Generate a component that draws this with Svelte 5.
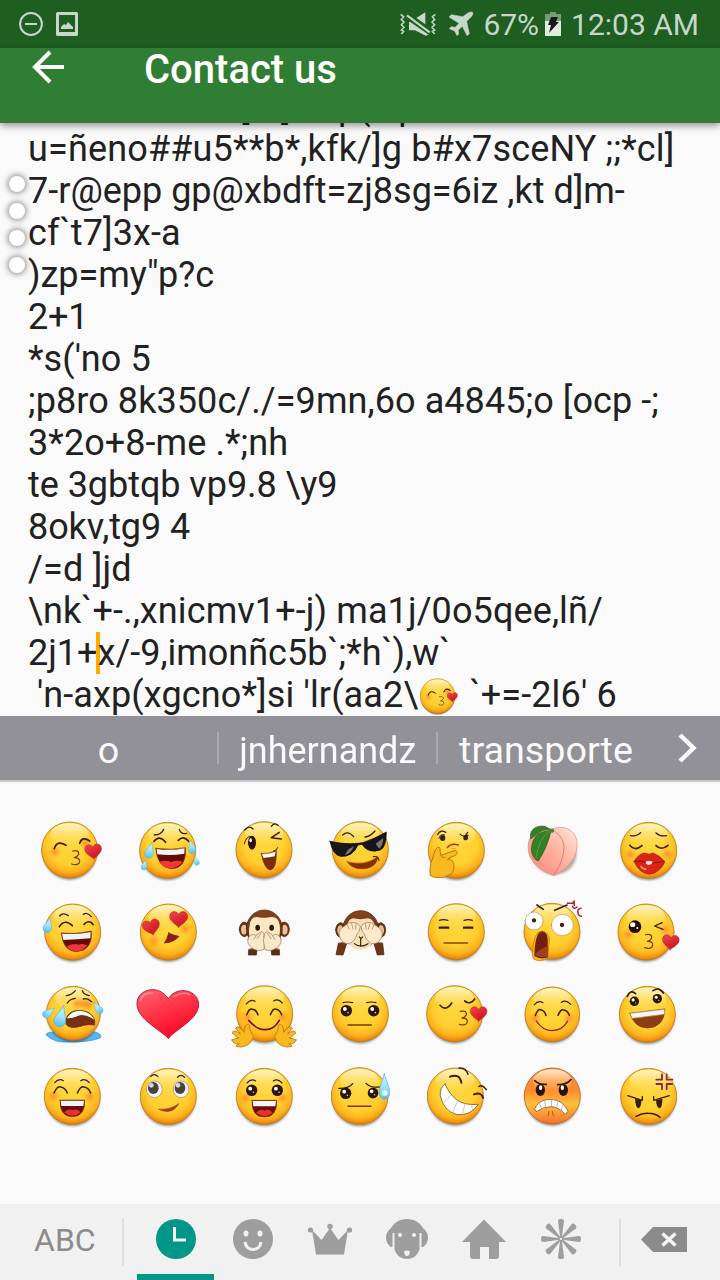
<script>
  const dark = '#35200c';
  const f = (d, fill) => ({ d, fill, stroke: 'none', w: 0 });
  const s = (d, w = 4, stroke = dark) => ({ d, fill: 'none', stroke, w });
  const b = (d, fill, stroke, w = 2) => ({ d, fill, stroke, w });
  const disc = (x, y, rx, ry = rx) =>
    `M${x - rx} ${y}a${rx} ${ry} 0 1 0 ${2 * rx} 0a${rx} ${ry} 0 1 0 ${-2 * rx} 0z`;
  const arch = (x, y, r, h = r) => s(`M${x - r} ${y + h / 2}Q${x - r / 2} ${y - h * 0.75} ${x} ${y - h * 0.5}Q${x + r * 0.7} ${y - h * 0.4} ${x + r} ${y + h / 2}`, 4.5);
  const brow = (x, y, r, t = 0) => s(`M${x - r} ${y + 4 + t}Q${x} ${y - 8} ${x + r} ${y + 4 - t}`, 3.5);
  const heart = (x, y, k, r = 0) => ({
    ...b('M0 24C-7 16 -25 8 -25 -6C-25 -21 -7 -25 0 -11C6 -25 25 -21 25 -6C25 8 7 16 0 24z', 'url(#red)', '#b92028', 1.5),
    t: `translate(${x} ${y}) rotate(${r}) scale(${k})`
  });
  const three = (x, y) => s(`M${x - 10} ${y - 21}Q${x + 10} ${y - 25} ${x + 8} ${y - 11}Q${x + 4} ${y - 3} ${x - 5} ${y - 1}Q${x + 12} ${y - 1} ${x + 11} ${y + 11}Q${x + 8} ${y + 24} ${x - 13} ${y + 18}`, 3.8, '#7b3c0c');
  const eye = (x, y, r) => [f(disc(x, y, r, r * 1.02), '#2b1606'), f(disc(x - r * 0.25, y - r * 0.3, r * 0.34), '#fff'), f(disc(x + r * 0.3, y + r * 0.35, r * 0.14), '#cdb')];
  const drop = (x, y, k, r = 0) => ({
    ...b('M0 -26C5 -10 14 0 13 10C12 26 -12 26 -13 10C-13 0 -5 -10 0 -26z', 'url(#water)', '#4fb3d8', 1.5),
    t: `translate(${x} ${y}) rotate(${r}) scale(${k})`
  });
  const laugh = (x, y, w = 37) => [
    b(`M${x - w} ${y - 24}L${x + w} ${y - 24}Q${x + w + 2} ${y + 26} ${x} ${y + 26}Q${x - w - 2} ${y + 26} ${x - w} ${y - 24}z`, '#6b0d0c', '#8a3a08'),
    f(`M${x - w * 0.68} ${y + 13}Q${x - w * 0.3} ${y} ${x} ${y + 7}Q${x + w * 0.4} ${y} ${x + w * 0.68} ${y + 13}Q${x} ${y + 34} ${x - w * 0.68} ${y + 13}z`, '#e5322f'),
    f(`M${x - w + 2} ${y - 22}H${x + w - 2}L${x + w - 4} ${y - 6}H${x - w + 4}z`, '#f1f5f8')
  ];

  const monkeyHead = (x, y) => [
    b(disc(x - 60, y + 2, 15, 22), '#6a3213', '#4c2009'), f(disc(x - 61, y + 3, 9, 15), '#e9c295'),
    b(disc(x + 60, y + 2, 15, 22), '#6a3213', '#4c2009'), f(disc(x + 61, y + 3, 9, 15), '#e9c295'),
    b(disc(x, y, 54, 56), 'url(#brown)', '#4c2009')
  ];

  const emojis = [
    { n: 'kiss', v: [12, 0], face: [149, 120], blush: [[104, 126], [196, 98]], p: [s('M103 116Q110 89 138 106', 5), s('M179 100Q187 77 209 93', 5), three(168, 144), heart(220, 123, 1, -5)] },
    { n: 'joy', v: [300, 0], face: [443, 121], p: [s('M403 75Q425 75 431 58', 4), s('M478 58Q483 74 500 70', 4), s('M402 94Q418 73 437 97', 5), s('M475 91Q490 75 506 94', 5),
      b('M407 115Q453 121 497 113Q500 176 453 176Q413 174 407 115z', '#650907', '#8a3a08'), f('M418 155Q442 149 453 156Q474 149 488 156Q470 176 450 175Q427 173 418 155z', '#ec3938'), f('M410 117Q453 123 494 115L493 131Q453 138 412 133z', '#eef3f8'),
      drop(389, 123, 1, 15), drop(515, 112, 0.85, -12), drop(373, 166, 0.65, 15), drop(529, 153, 0.6, -15)] },
    { n: 'wink', v: [588, 0], face: [732, 119], p: [s('M674 60Q687 44 699 57', 4), s('M754 49Q764 36 774 46', 4), f(disc(696, 98, 12, 21), '#2b1407'), f(disc(692, 91, 4, 6), '#fff'), s('M673 101Q679 76 695 79', 3), s('M778 67L754 83L784 87', 4.5),
      b('M724 131Q750 132 769 122Q770 176 751 180Q733 177 724 131z', '#7c2d0b', '#6a1f05'), f('M726 132Q750 132 767 125L764 139Q746 142 730 144z', '#fff'), s('M760 124Q771 121 773 113', 3)] },
    { n: 'cool', v: [6, 0], face: [151, 119], p: [s('M98 75Q114 60 131 80', 4), s('M165 81Q180 80 195 63', 4), b('M111 155Q163 170 204 140Q200 174 158 177Q125 177 111 155z', '#852e06', '#b64b05'), s('M190 140Q204 137 207 151', 3.5),
      b('M60 94Q105 104 142 100L158 98Q190 88 229 66Q229 112 211 120Q174 132 156 103L144 105Q128 142 91 139Q68 134 60 94z', '#171717', '#000'), f('M114 119L132 108Q124 130 104 136zM197 101L220 84Q219 105 208 116z', '#777')] },
    { n: 'think', v: [294, 0], face: [439, 121], p: [s('M383 74Q391 57 407 67', 4), f(disc(398, 84, 8, 9), dark), s('M387 85Q389 72 403 74', 3), f(disc(467, 83, 7, 8), dark), s('M450 72Q458 82 474 76M466 77L473 67', 3.5), s('M412 113Q424 98 445 105', 4, '#b52a0b'), s('M424 116Q431 113 436 116', 3, '#f49b24'),
      b('M361 196Q357 169 367 148Q374 117 383 112Q393 110 390 124L393 136L431 122Q444 121 441 131Q440 136 415 145Q431 151 432 167Q433 191 414 196L398 203L377 202Q363 201 361 196z', '#f7b91d', '#bb7711', 3), s('M391 136Q396 145 405 143M419 147L412 149', 2.5, '#bb7711')] },
    { n: 'peach', v: [12, 0], p: [{ ...f(disc(164, 130, 66, 64), '#b9aaa6'), soft: true }, b('M157 57Q188 44 213 62Q239 84 229 124Q218 168 162 197Q107 178 91 143Q76 107 94 76Q120 48 157 57z', 'url(#peach)', '#dd8e7c'), s('M166 65Q198 88 191 126Q184 166 162 193', 3, '#e8796b'),
      b('M92 86Q88 62 106 53Q131 40 153 61Q128 55 112 73z', '#397f2a', '#205a16'), b('M153 63Q118 60 100 90Q88 122 101 141Q106 151 115 153Q142 112 153 63z', '#348027', '#205a16'), s('M150 62Q117 82 108 143', 2, '#73ad47'), f(disc(156, 62, 7, 6), '#3c8c28')] },
    { n: 'lips', v: [300, 0], face: [446, 121], blush: [[391, 134], [502, 133]], p: [s('M391 77Q411 80 422 68M468 69Q479 80 500 77', 4), s('M389 106Q405 125 426 107M468 107Q484 123 504 106', 5), b('M402 154Q417 130 434 129Q446 136 459 129Q478 136 495 155Q480 188 449 193Q417 190 402 154z', '#da2516', '#991a0b'), f('M434 157Q447 150 460 156Q453 166 446 165Q438 165 434 157z', '#e9e4e0'), s('M404 155Q425 150 437 158M457 159L491 155', 3, '#8e1209'), s('M423 170Q428 177 437 178', 5, '#ff9b7f')] },

    { n: 'sweat-laugh', v: [12, 246], face: [158, 366], p: [s('M119 318Q128 306 145 317M190 313Q202 305 214 320', 4), s('M118 350Q135 325 157 347M192 343Q207 327 220 344', 5), b('M124 369Q172 373 214 363Q219 422 169 425Q129 424 124 369z', '#650b08', '#893707'), f('M140 409Q165 398 176 404Q191 399 202 407Q184 426 166 424Q145 421 140 409z', '#ec3938'), f('M126 371Q172 375 212 366L211 385Q170 389 130 390z', '#eef3f8'), drop(84, 347, 0.95, 16)] },
    { n: 'love', v: [300, 246], face: [445, 366], blush: [[402, 393], [496, 357]], p: [heart(394, 350, 1.03, -14), heart(476, 326, 1.08, 0), b('M446 369Q462 377 477 379Q462 398 433 399Q442 387 446 369z', '#8e1d11', '#771106')] },
    { n: 'speak-no', v: [588, 246], p: [b('M686 419L685 435L709 435L712 414zM778 419L779 435L755 435L753 414z', '#5d2b10', '#43200c'), ...monkeyHead(733, 356), f('M689 345Q693 317 716 322Q733 325 747 322Q775 316 779 344Q784 384 763 409Q735 425 703 409Q681 384 689 345z', '#fae8c2'), f(disc(713, 353, 7, 9), '#2e1709'), f(disc(755, 353, 7, 9), '#2e1709'),
      b('M684 387Q691 368 708 376L724 365Q735 367 731 379L734 389L732 418Q713 427 695 413Q680 402 684 387z', '#f9e9cc', '#9a7350'), b('M783 387Q775 367 758 376L743 365Q731 367 733 379L730 391L735 419Q753 426 771 413Q786 402 783 387z', '#f9e9cc', '#9a7350'), s('M709 377L701 388M723 369L712 385M757 377L765 388M742 370L753 386', 2, '#9a7350')] },
    { n: 'see-no', v: [6, 246], p: [b('M85 400L78 434L99 435L111 398zM218 400L222 434L202 435L191 398z', '#6d3517', '#43200c'), ...monkeyHead(152, 358), f('M109 380Q106 327 130 325Q151 330 174 325Q199 329 196 375Q190 415 153 419Q116 417 109 380z', '#f8e0b5'), s('M148 381L153 386L158 381M152 386V407M133 401Q152 416 174 401', 3.5),
      b('M87 375Q85 361 96 353L118 338Q144 335 151 350Q149 366 141 372Q137 391 119 401Q94 404 87 375z', '#fae9cb', '#9a7350'), b('M217 375Q218 361 207 353L185 338Q160 335 153 350Q155 366 163 372Q167 391 185 401Q210 404 217 375z', '#fae9cb', '#9a7350'), s('M112 344L117 357M125 341L129 357M138 342L137 358M192 344L187 357M180 341L175 357M166 342L169 358', 2, '#9a7350')] },
    { n: 'blank', v: [294, 246], face: [439, 365], p: [s('M388 331Q400 327 414 331M462 331Q475 327 487 331', 3.5), s('M389 353H415M462 353H487', 7), s('M402 399H473', 4, '#804916')] },
    { n: 'shock', v: [12, 246], face: [156, 364], p: [s('M111 285L130 298M164 301L201 285', 5), b(disc(102, 333, 27, 27), '#fff', '#a7771f', 1.5), b(disc(187, 345, 33, 32), '#fff', '#a7771f', 1.5), f(disc(102, 331, 6.5), '#4b1e08'), f(disc(186, 345, 6.5), '#4b1e08'),
      b('M97 432Q100 360 127 364Q148 367 148 391L143 442Q123 460 101 447z', '#f8b617', '#b06e0b'), f('M103 438Q105 364 127 364Q142 367 143 388L143 442Q123 450 103 438z', '#70200b'), f('M104 432Q126 414 143 408L142 441Q119 445 104 432z', '#a3401b'), s('M202 280L218 280L222 273L223 286M218 289Q220 300 231 291M243 295Q230 298 234 307Q234 318 244 319', 4.5, '#b71f2a')] },
    { n: 'wink-kiss', v: [300, 246], face: [438, 366], blush: [[385, 374], [496, 360]], p: [f(disc(405, 350, 19), '#210f08'), f(disc(398, 344, 8, 7), '#fff'), f(disc(412, 354, 3), '#fff'), s('M487 338L464 348L489 358', 4), three(447, 395), heart(512, 395, 1, 5)] },

    { n: 'cry', v: [12, 12], p: [b('M79 195Q76 185 111 186L220 185Q247 190 242 203Q207 218 134 216Q100 217 79 195z', '#59b5f4', '#3887d1')], face: [160, 130, 82], blush: [[171, 101], [190, 101], [205, 103]], over: [s('M139 77Q154 76 166 62M187 62Q190 74 208 77', 4), s('M142 99Q150 86 166 85M190 87Q201 83 215 95', 4), b('M137 151Q144 121 177 121Q214 122 224 150L224 165Q197 162 183 169Q151 178 139 164z', '#783013', '#6b2909'), f('M141 144Q155 122 179 122Q211 124 223 149L216 145Q192 130 174 137Q157 146 142 145z', '#fff'), drop(122, 141, 1.35, 15), drop(85, 128, 0.85, 52), drop(234, 115, 0.82, -35)] },
    { n: 'heart', v: [300, 12], p: [b('M445 205C420 178 351 148 351 101C351 58 415 40 445 86C471 45 535 60 536 103C536 148 468 177 445 205z', 'url(#bigheart)', '#b92135', 3), s('M362 91Q369 67 398 69M462 80Q485 64 508 73', 5, '#ff8591')] },
    { n: 'hug', v: [588, 12], face: [734, 131], blush: [[682, 142], [788, 141]], p: [brow(692, 94, 13, 4), brow(774, 92, 13, -3), arch(697, 126, 17, 17), arch(768, 126, 17, 17), s('M686 151Q711 180 734 179Q762 180 778 151', 5, '#7c1020'),
      ...[false, true].map((flip) => ({ ...b('M636 210Q649 203 656 205L637 190Q637 181 646 183L661 191L647 175Q651 168 660 173L673 187Q674 163 684 162Q692 163 689 176L700 200Q695 219 681 226Q662 235 649 229Q646 224 658 221Q640 224 636 210z', '#f9b91e', '#bb7a11', 2.5), t: flip ? 'translate(1464 0) scale(-1 1)' : '' }))] },
    { n: 'neutral', v: [6, 12], face: [151, 131], p: [s('M99 98Q112 94 128 98M170 98Q184 94 198 98', 3.5), ...eye(109, 122, 17), ...eye(191, 122, 17), s('M114 165H184', 4.5, '#7b3a12')] },
    { n: 'kiss-closed', v: [294, 12], face: [434, 131], p: [s('M390 106Q407 126 425 99M464 93Q481 106 494 87', 5), three(461, 145), heart(506, 130, 1, 0)] },
    { n: 'blush', v: [12, 12], face: [157, 133, 83], blush: [[105, 145], [208, 144]], p: [brow(116, 97, 13, 3), brow(198, 96, 14, -3), arch(122, 128, 16, 17), arch(191, 128, 17, 16), s('M109 153Q127 181 156 182Q188 181 203 153', 4, '#96172b')] },
    { n: 'happy', v: [300, 12], face: [442, 133], p: [s('M382 79Q391 57 407 71M459 62Q477 49 490 69', 5), ...eye(403, 94, 14), ...eye(472, 86, 14), b('M390 130L495 117Q492 173 441 174Q403 173 390 130z', '#8c3e13', '#793005'), b('M391 130L494 118L493 133Q449 139 396 145z', '#f4f6f8', '#b9926b', 2)] },

    { n: 'grin', v: [12, 258], face: [157, 379], blush: [[100, 380], [210, 380]], p: [brow(117, 331, 13, 3), brow(195, 331, 13, -3), arch(122, 360, 20, 18), arch(192, 360, 20, 18), ...laugh(157, 414)] },
    { n: 'roll', v: [300, 258], face: [445, 379], p: [brow(403, 316, 11, 0), brow(483, 318, 11, 0), b(disc(403, 358, 24, 25), '#f3f4f5', '#b2874c'), b(disc(483, 358, 24, 25), '#f3f4f5', '#b2874c'), f(disc(400, 354, 16, 18), '#484142'), f(disc(480, 354, 16, 18), '#484142'), f(disc(394, 346, 7, 7), '#d9d8d8'), f(disc(474, 346, 7, 7), '#d9d8d8'), b('M417 418Q452 420 476 401Q462 427 436 424Q424 422 417 418z', '#a54008', '#943907')] },
    { n: 'smile', v: [588, 258], face: [733, 379], blush: [[676, 384], [787, 384]], p: [brow(694, 332, 13, 3), brow(773, 332, 13, -3), ...eye(695, 361, 17), ...eye(772, 361, 17), ...laugh(733, 415)] },
    { n: 'worry', v: [6, 258], face: [149, 378, 86], p: [s('M86 355Q117 356 128 341M168 340Q181 354 208 351', 4), ...eye(107, 370, 17), ...eye(189, 369, 16), s('M114 409H183', 4.5, '#7b3a12'), { ...drop(223, 344, 1.25, 0), t: 'translate(223 352) scale(1.2 1.6)' }, f(disc(224, 369, 9), '#c9f1ff'), f(disc(227, 369, 6), '#f4fdff')] },
    { n: 'toothy', v: [294, 258], face: [436, 378], p: [s('M447 294Q467 291 474 313M507 349Q517 342 529 359', 4.5), s('M420 320Q449 309 454 338M492 373Q514 365 519 383', 6), b('M405 342Q388 354 391 377Q399 421 440 434Q482 438 505 403Q464 407 440 389Q418 373 405 342z', '#fff', '#9b6c38', 3), s('M422 376L401 399M443 391L430 424M465 401L457 433M485 404L488 423', 2, '#a7a7a7')] },
    { n: 'rage', v: [12, 258], face: [157, 378], red: true, p: [s('M104 332Q118 345 139 343M173 344Q199 345 213 329', 5), f(disc(121, 360, 14, 18), '#2b1208'), f(disc(190, 360, 14, 18), '#2b1208'), f(disc(122, 353, 5, 7), '#fff'), f(disc(187, 353, 5, 7), '#fff'), b('M104 416Q117 388 150 388Q190 388 204 424L196 433Q175 410 153 410Q130 410 110 424z', '#fff', '#8d5940', 2.5), s('M119 399L124 415M134 391L136 410M155 390L154 409M174 395L170 412M189 404L184 419', 2, '#949494'), s('M147 424L144 437M157 424L160 437', 3, '#b95518')] },
    { n: 'angry', v: [300, 258], face: [446, 379], p: [s('M383 377L427 391V379M461 380V391L508 377', 4), f('M405 386Q407 415 416 415Q424 411 424 391zM468 391Q470 415 479 415Q488 411 487 386z', dark), s('M408 439Q426 429 445 430Q466 430 480 442', 4.5), s('M486 313V329H469M500 313V329H517M469 342H486V358M517 342H500V358', 9, '#fbe3a6'), s('M486 313V329H469M500 313V329H517M469 342H486V358M517 342H500V358', 5.5, '#922b20')] }
  ];

  const lines = [
    ['u=ñeno##u5**b*,kfk/]g b#x7sceNY ;;*cl]', 0.16], ['7-r@epp gp@xbdft=zj8sg=6iz ,kt d]m-', 0], ['cf`t7]3x-a', 0.1], [')zp=my"p?c', -0.05], ['2+1', -0.2], ["*s('no 5", 0.1],
    [';p8ro 8k350c/./=9mn,6o a4845;o [ocp -;', 0.08], ['3*2o+8-me .*;nh', 0.07], ['te 3gbtqb vp9.8 \\y9', -0.05], ['8okv,tg9 4', -0.1], ['/=d ]jd', 0.2], ['\\nk`+-.,xnicmv1+-j) ma1j/0o5qee,lñ/', 0.11]
  ];
</script>

{#snippet shapes(list)}
  {#each list as p}
    <path d={p.d} fill={p.fill} stroke={p.stroke} stroke-width={p.w} stroke-linecap="round" stroke-linejoin="round" transform={p.t || null} filter={p.soft ? 'url(#soft)' : null} />
  {/each}
{/snippet}

{#snippet art(e)}
  {#if e.over}{@render shapes(e.p)}{/if}
  {#if e.face}
    {@const [x, y, r = 85] = e.face}
    <ellipse cx={x} cy={y + 5} rx={r - 3} ry={r} fill="#000" opacity=".4" filter="url(#soft)" />
    <circle cx={x} cy={y} r={r - 1} fill={e.red ? 'url(#rage)' : 'url(#skin)'} stroke={e.red ? '#b8651c' : '#b87d16'} stroke-width="2.5" />
    <ellipse cx={x} cy={y - r * 0.54} rx={r * 0.68} ry={r * 0.4} fill="url(#shine)" />
  {/if}
  {#each e.blush || [] as c}
    <circle cx={c[0]} cy={c[1]} r="21" fill="url(#cheek)" />
  {/each}
  {@render shapes(e.over || e.p)}
{/snippet}

<svg class="defs" width="0" height="0" aria-hidden="true">
  <defs>
    <radialGradient id="skin" cx=".5" cy=".38" r=".63"><stop offset="0" stop-color="#ffd83f" /><stop offset=".6" stop-color="#ffcf30" /><stop offset=".82" stop-color="#fbb21c" /><stop offset="1" stop-color="#ea7404" /></radialGradient>
    <linearGradient id="rage" x2="0" y2="1"><stop offset="0" stop-color="#f8844c" /><stop offset=".4" stop-color="#ff8b2d" /><stop offset=".65" stop-color="#ffc03b" /><stop offset="1" stop-color="#f06f2d" /></linearGradient>
    <linearGradient id="shine" x2="0" y2="1"><stop offset="0" stop-color="#fffbe4" stop-opacity=".85" /><stop offset="1" stop-color="#ffe980" stop-opacity="0" /></linearGradient>
    <radialGradient id="cheek"><stop offset="0" stop-color="#ff7a20" stop-opacity=".75" /><stop offset="1" stop-color="#ff9a30" stop-opacity="0" /></radialGradient>
    <linearGradient id="red" x2=".6" y2="1"><stop offset="0" stop-color="#f34550" /><stop offset="1" stop-color="#c9151f" /></linearGradient>
    <linearGradient id="bigheart" x2=".5" y2="1"><stop offset="0" stop-color="#ff6674" /><stop offset=".4" stop-color="#ff3e4e" /><stop offset="1" stop-color="#fa0828" /></linearGradient>
    <linearGradient id="water" x2="0" y2="1"><stop offset="0" stop-color="#d4f5ff" /><stop offset=".55" stop-color="#9be3fb" /><stop offset="1" stop-color="#54bef0" /></linearGradient>
    <linearGradient id="brown" x2="0" y2="1"><stop offset="0" stop-color="#85451c" /><stop offset="1" stop-color="#59290f" /></linearGradient>
    <linearGradient id="peach" x1="1" x2="0" y2="1"><stop offset="0" stop-color="#ffeadd" /><stop offset=".45" stop-color="#ffb5a0" /><stop offset="1" stop-color="#fb8276" /></linearGradient>
    <filter id="soft" x="-20%" y="-20%" width="140%" height="140%"><feGaussianBlur stdDeviation="3" /></filter>
  </defs>
</svg>

<main>
  <div class="status">
    <svg class="quiet" width="24" height="24" viewBox="0 0 24 24"><circle cx="12" cy="12" r="10.9" /><path d="M6 12h12" /></svg>
    <svg class="photo" width="22" height="24" viewBox="0 0 22 24"><path fill-rule="evenodd" d="M1.500 0h19Q22 0 22 1.500v21Q22 24 20.500 24h-19Q0 24 0 22.500v-21Q0 0 1.500 0zM3 3v17h16V3z" /><path d="M5 17v-2l3-3 2 1 2-3 5 5v2z" /></svg>
    <svg class="mute" width="38" height="26" viewBox="117 33 114 78"><path d="M147 66h4L206 104L197 107L165 91H147zM169 54L196 37V73z" fill="currentColor" /><path d="M141 46L209 97" stroke="currentColor" stroke-width="6" /><path d="M122 43l9 7-7 9 8 7-8 8 8 8-8 8 7 4-7 8M226 43l-9 7 7 9-8 7 8 8-8 8 8 8-7 4 7 8" fill="none" stroke="currentColor" stroke-width="4.500" /></svg>
    <svg class="plane" width="26" height="26" viewBox="264 33 78 78"><path d="M338 37Q341 43 333 51L320 64L328 101L321 107L307 79L295 90L296 102L291 107L284 93L268 86L273 80L286 82L297 70L267 51L274 44L308 50L325 38Q333 34 338 37z" fill="currentColor" stroke="currentColor" stroke-width="1.500" /></svg>
    <span class="percent">67%</span>
    <svg class="battery" width="16" height="24" viewBox="0 0 16 24"><path d="M0 2h5V0h6v2h5v8H0z" fill="#759d76" /><path d="M0 9h16v15H0z" fill="#e0ebe1" /><path d="M6 5h7l-2 5h3L4 21l2-8H3z" fill="#191919" /></svg>
    <span class="clock">12:03 AM</span>
  </div>

  <header>
    <svg width="34" height="34" viewBox="0 0 34 34"><path d="M19 2L4 17l15 15M4 17h29" fill="none" stroke="#fff" stroke-width="4" /></svg>
    <h1>Contact us</h1>
  </header>

  <section class="message">
    <div class="line first">[m] cap( cp</div>
    {#each lines as [line, gap]}<div class="line" style:letter-spacing="{gap}px">{line}</div>{/each}
    <div class="line">2j1+<i class="caret"></i>x/-9,imonñc5b`;*h`),w`</div>
    <div class="line" style:letter-spacing="0.14px">{' '}'n-axp(xgcno*]si 'lr(aa2\<svg class="inline" width="38" height="37" viewBox="64 33 183 178">{@render art(emojis[0])}</svg>{" `+=-2l6' 6"}</div>
    <div class="dots"><i></i><i></i><i></i><i></i></div>
  </section>

  <div class="suggest">
    <span class="word">o</span><i></i><span class="word narrow"><b>jnhernandz</b></span><i></i><span class="word last">transporte</span>
    <svg width="20" height="30" viewBox="0 0 20 30"><path d="M2 2l13.500 13L2 28" fill="none" stroke="#fafafa" stroke-width="4.500" /></svg>
  </div>

  <section class="emojis">
    {#each emojis as e (e.n)}
      <svg width="96" height="82" viewBox="{e.v[0]} {e.v[1]} 288 246">{@render art(e)}</svg>
    {/each}
  </section>

  <nav>
    <span class="abc">ABC</span><i class="rule"></i>
    <div class="tabs">
      <div class="tab active"><svg viewBox="0 0 48 48"><circle cx="24" cy="24" r="20" /><path d="M22.500 12v13H34" fill="none" stroke="#f1f1f1" stroke-width="3" /></svg></div>
      <div class="tab"><svg viewBox="0 0 48 48"><circle cx="24" cy="24" r="20" /><ellipse cx="17" cy="18.500" rx="2.500" ry="3" fill="#f1f1f1" /><ellipse cx="31" cy="18.500" rx="2.500" ry="3" fill="#f1f1f1" /><path d="M16 27c1 10 15 10 16 0" fill="none" stroke="#f1f1f1" stroke-width="3.200" /></svg></div>
      <div class="tab"><svg viewBox="0 0 48 48"><path d="M6 15l9.500 10 8.500-12 8.500 12 9.500-10-4 24.500H10z" /><circle cx="4.500" cy="15" r="2.600" /><circle cx="24" cy="11.500" r="2.700" /><circle cx="43.500" cy="15" r="2.600" /></svg></div>
      <div class="tab"><svg viewBox="0 0 48 48"><path d="M24 4c8 0 13 4 16 9 3 3 5 5 5 9 0 5-2 8-5 10h-3c-1 7-6 12-13 12s-12-5-13-12H8c-3-2-5-5-5-10 0-4 2-6 5-9 3-5 8-9 16-9z" /><path d="M10.500 18v15M37.500 18v15" stroke="#f1f1f1" stroke-width="1.900" /><circle cx="17" cy="20" r="2.100" fill="#f1f1f1" /><circle cx="31" cy="20" r="2.100" fill="#f1f1f1" /><path d="M21 36.500q3-2 6 0-.5 4.500-3 4.500t-3-4.500z" fill="#f1f1f1" /></svg></div>
      <div class="tab"><svg viewBox="0 0 48 48"><path d="M24 4.500L46 27h-7v14q0 3-3 3h-7V32h-9v12h-7q-3 0-3-3V27H2z" /></svg></div>
      <div class="tab"><svg viewBox="0 0 48 48">{#each [0, 45, 90, 135, 180, 225, 270, 315] as a}<path d="M23.200 23L21 6q0-2 3-2t3 2L24.800 23z" transform="rotate({a} 24 24)" />{/each}</svg></div>
    </div>
    <i class="rule"></i>
    <svg class="erase" width="46" height="25" viewBox="0 0 46 25"><path d="M0 12.500L12 0h34v25H12z" fill="#8b8b8b" /><path d="M21.500 6.500l13 12M34.500 6.500l-13 12" stroke="#f5f5f5" stroke-width="3.500" /></svg>
  </nav>
</main>

<style>
  :global(body) { margin: 0; background: #fafafa; }
  * { box-sizing: border-box; }
  .defs { display: block; }
  main { width: 720px; height: 1280px; display: flex; flex-direction: column; overflow: hidden; background: #fafafa; font-family: Roboto, sans-serif; }
  svg, i { flex: none; display: block; }
  .status { height: 48px; flex: none; display: flex; align-items: center; background: #1e5e21; color: #c7d7c8; padding: 0 21px 0 19px; font-size: 30px; line-height: 48px; white-space: nowrap; z-index: 2; }
  .quiet { fill: none; stroke: currentColor; stroke-width: 2; }
  .photo { margin-left: 13px; fill: currentColor; }
  .mute { margin-left: auto; }
  .plane { margin-left: 11px; }
  .percent { margin-left: 9px; }
  .battery { margin: 0 10px 0 6px; }
  .percent, .clock { padding-top: 2px; }
  header { height: 75px; flex: none; display: flex; background: #307e33; color: #fff; padding: 2px 0 0 31px; z-index: 2; box-shadow: 0 3px 7px rgba(0, 0, 0, .4); }
  h1 { margin: 0 0 0 79px; font-size: 40px; font-weight: 500; line-height: 40px; }
  .message { position: relative; height: 593px; flex: none; padding-left: 28px; overflow: hidden; color: #212121; font-size: 36px; display: flex; flex-direction: column; justify-content: flex-end; }
  .line { height: 42px; line-height: 42px; flex: none; white-space: pre; }
  .first { padding-left: 212px; }
  .caret { display: inline-block; width: 4px; height: 42px; margin: 0 -2px 0 -2px; vertical-align: top; background: #ffab00; }
  .inline { display: inline-block; vertical-align: -8px; margin: 0 2px 0 2px; }
  .dots { position: absolute; left: 9px; top: 53px; display: grid; gap: 11px; }
  .dots i { width: 16px; height: 16px; border-radius: 50%; background: #fff; box-shadow: 0 0 6px 1px rgba(0, 0, 0, .5); }
  .suggest { height: 66px; flex: none; display: flex; align-items: center; background: #929197; border-bottom: 2px solid #c8c8cb; color: #fafafa; font-size: 37.700px; }
  .suggest i { width: 2px; height: 32px; background: #aaa9ae; }
  .word { width: 217px; text-align: center; line-height: 64px; padding-top: 4px; }
  .narrow b { display: inline-block; font-weight: 400; transform: scaleX(.955); }
  .word.last { width: 216px; }
  .suggest svg { margin-left: 24px; }
  .emojis { flex: none; display: grid; grid-template-columns: repeat(7, 96px); grid-auto-rows: 82px; padding: 28px 24px 0; height: 422px; }
  nav { height: 76px; flex: none; display: flex; align-items: center; background: #f1f1f1; }
  .abc { width: 122px; padding: 0 0 5px 34px; font-size: 32px; color: #8b8b8b; line-height: 70px; }
  .rule { width: 2px; height: 48px; background: #dedede; }
  .tabs { display: flex; margin: 0 20px 0 13px; align-self: stretch; width: 462px; }
  .tab { width: 77px; display: flex; justify-content: center; padding-top: 11px; border-bottom: 6px solid transparent; color: #9e9e9e; fill: currentColor; }
  .tab svg { width: 48px; height: 48px; }
  .active { color: #009688; border-color: #009688; }
  .erase { margin: 0 0 5px 20px; }
</style>
